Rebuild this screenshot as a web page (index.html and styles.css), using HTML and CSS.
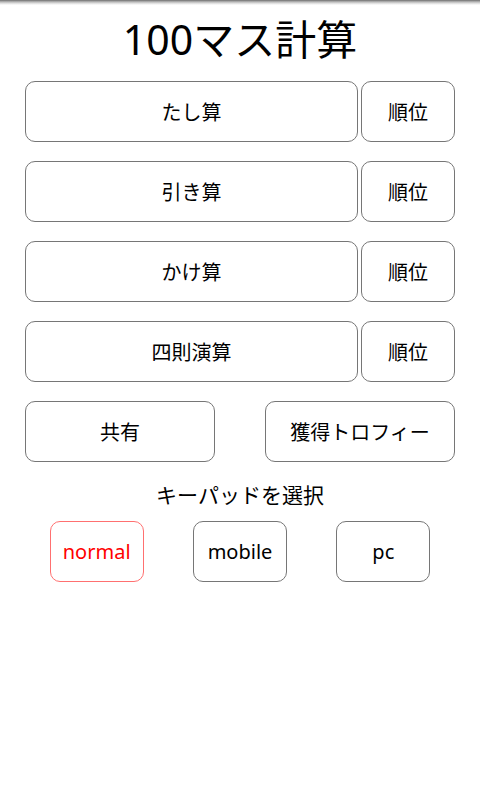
FILE: index.html
```html
<!DOCTYPE html>
<html lang="ja">
<head>
<meta charset="utf-8">
<title>100マス計算</title>
<link rel="stylesheet" href="styles.css">
</head>
<body>
<div class="screen">
  <h1 class="title">100マス計算</h1>
  <div class="menu">
    <div class="row">
      <button class="btn btn-wide">たし算</button>
      <button class="btn btn-rank">順位</button>
    </div>
    <div class="row">
      <button class="btn btn-wide">引き算</button>
      <button class="btn btn-rank">順位</button>
    </div>
    <div class="row">
      <button class="btn btn-wide">かけ算</button>
      <button class="btn btn-rank">順位</button>
    </div>
    <div class="row">
      <button class="btn btn-wide">四則演算</button>
      <button class="btn btn-rank">順位</button>
    </div>
    <div class="row row-split">
      <button class="btn btn-half">共有</button>
      <button class="btn btn-half">獲得トロフィー</button>
    </div>
  </div>
  <p class="label">キーパッドを選択</p>
  <div class="keypads">
    <button class="btn btn-key selected">normal</button>
    <button class="btn btn-key">mobile</button>
    <button class="btn btn-key">pc</button>
  </div>
</div>
</body>
</html>
```

FILE: styles.css
```css
html {
  background: #fff;
}
body {
  margin: 0;
  min-height: 800px;
  background: linear-gradient(to bottom, #6a6a6a 0, #9a9a9a 1px, #d8d8d8 3px, #ffffff 5px) no-repeat;
  background-size: 100% 5px;
  background-color: #fff;
  font-family: "Noto Sans", "Noto Sans CJK JP", sans-serif;
  color: #000;
}
.screen {
  display: flex;
  flex-direction: column;
  padding: 0 25px;
}
.title {
  margin: 0;
  height: 81px;
  display: flex;
  align-items: center;
  justify-content: center;
  font-size: 41px;
  font-weight: normal;
  line-height: 1;
  padding-bottom: 3px;
  box-sizing: border-box;
}
.menu {
  display: flex;
  flex-direction: column;
  gap: 19px;
}
.row {
  display: flex;
  gap: 3px;
}
.row-split {
  justify-content: space-between;
}
.btn {
  box-sizing: border-box;
  height: 61px;
  border: 1px solid #767676;
  border-radius: 10px;
  background: #fff;
  font-family: "Noto Sans", "Noto Sans CJK JP", sans-serif;
  font-size: 20px;
  color: #000;
  padding: 0;
  margin: 0;
}
.btn-wide {
  flex: 1;
}
.btn-rank {
  width: 94px;
}
.btn-half {
  width: 190px;
}
.label {
  margin: 0;
  height: 59px;
  display: flex;
  align-items: center;
  justify-content: center;
  font-size: 21px;
  padding-top: 5px;
  box-sizing: border-box;
}
.keypads {
  display: grid;
  grid-template-columns: repeat(3, 1fr);
  justify-items: center;
}
.btn-key {
  width: 94px;
}
.btn-key.selected {
  border-color: #ff7070;
  color: #ff0000;
}
```
